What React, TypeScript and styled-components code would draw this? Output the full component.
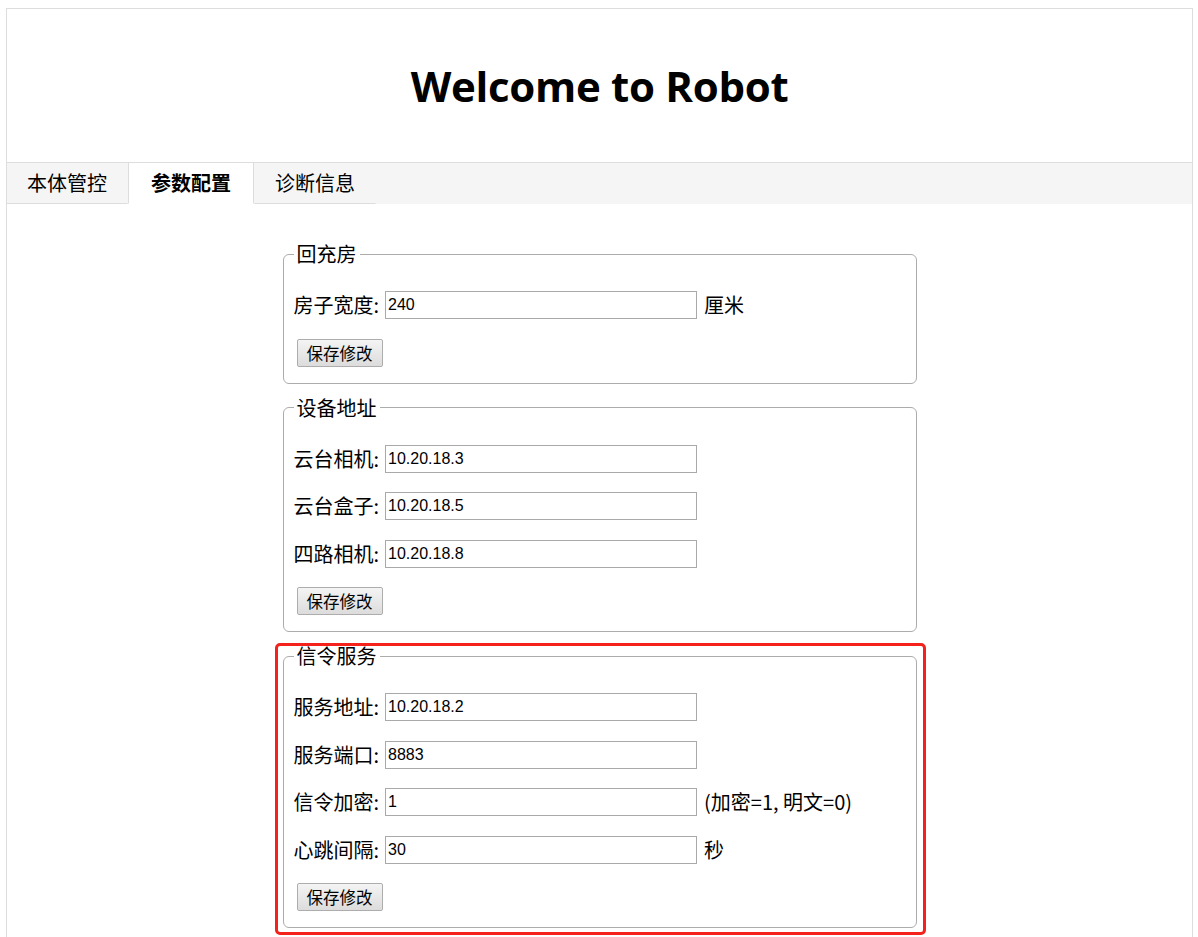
import styled, { createGlobalStyle } from "styled-components";

const GlobalStyle = createGlobalStyle`
  body {
    margin: 8px 5px 0 6px;
    background: #fff;
    color: #000;
    font-family: "Noto Sans CJK SC", "Noto Sans", sans-serif;
  }
`;

const Page = styled.div`
  border: 1px solid #ddd;
  border-bottom: none;
  min-height: 940px;
`;

const Header = styled.header`
  height: 153px;
  display: flex;
  align-items: center;
  justify-content: center;
`;

const Title = styled.h1`
  margin: 0;
  font-family: "Open Sans", "Noto Sans", sans-serif;
  font-size: 42px;
  font-weight: 700;
  letter-spacing: -0.3px;
`;

const TabBar = styled.nav`
  display: flex;
  height: 41px;
  background: #f5f5f5;
  border-top: 1px solid #ddd;
`;

const Tab = styled.div<{ $active?: boolean }>`
  display: flex;
  align-items: center;
  justify-content: center;
  padding: 0 ${({ $active }) => ($active ? "22px" : "20px")};
  font-size: 20px;
  line-height: 24px;
  font-weight: ${({ $active }) => ($active ? 700 : 400)};
  background: ${({ $active }) => ($active ? "#fff" : "transparent")};
  border-bottom: 1px solid ${({ $active }) => ($active ? "transparent" : "#ddd")};
  border-left: 1px solid ${({ $active }) => ($active ? "#ddd" : "transparent")};
  border-right: 1px solid ${({ $active }) => ($active ? "#ddd" : "transparent")};
  height: 41px;
  box-sizing: border-box;
  &:first-child {
    border-left: none;
  }
`;

const Content = styled.main`
  width: 634px;
  margin: 0 auto;
  padding-top: 38px;
  display: flex;
  flex-direction: column;
  gap: 12px;
`;

const Marked = styled.div`
  position: relative;
  &::after {
    content: "";
    position: absolute;
    inset: -1px -9px -7px -8px;
    border: 3px solid #f5221c;
    border-radius: 5px;
    pointer-events: none;
  }
`;

const Box = styled.fieldset`
  margin: 0;
  border: 1px solid #acacac;
  border-radius: 6px;
  padding: 25px 10px 16px;
  min-width: 0;
`;

const Legend = styled.legend`
  font-size: 20px;
  line-height: 24px;
  padding: 0 3px;
  margin-left: 0;
`;

const Row = styled.div`
  display: flex;
  align-items: center;
  height: 28px;
  margin-bottom: 19.5px;
  font-size: 20px;
  line-height: 28px;
`;

const Label = styled.label`
  margin-right: 6px;
  white-space: nowrap;
`;

const Input = styled.input`
  box-sizing: border-box;
  width: 312px;
  height: 28px;
  margin: 0;
  padding: 1px 2px;
  border: 1px solid #a9a9a9;
  border-radius: 0;
  font-family: "Liberation Sans", Arial, sans-serif;
  font-size: 16px;
  color: #000;
  outline: none;
`;

const Suffix = styled.span`
  margin-left: 7px;
  white-space: nowrap;
`;

const SaveButton = styled.button`
  display: block;
  box-sizing: border-box;
  height: 28px;
  margin: 1px 0 0 3px;
  padding: 0 9px;
  border: 1px solid #adadad;
  border-radius: 2px;
  background: linear-gradient(#f4f4f4, #dcdcdc);
  font-family: "Noto Sans CJK SC", sans-serif;
  font-size: 16.5px;
  line-height: 26px;
  color: #000;
`;

type Field = { label: string; value: string; suffix?: string };

const groups: { title: string; fields: Field[]; marked?: boolean }[] = [
  { title: "回充房", fields: [{ label: "房子宽度:", value: "240", suffix: "厘米" }] },
  {
    title: "设备地址",
    fields: [
      { label: "云台相机:", value: "10.20.18.3" },
      { label: "云台盒子:", value: "10.20.18.5" },
      { label: "四路相机:", value: "10.20.18.8" },
    ],
  },
  {
    title: "信令服务",
    marked: true,
    fields: [
      { label: "服务地址:", value: "10.20.18.2" },
      { label: "服务端口:", value: "8883" },
      { label: "信令加密:", value: "1", suffix: "(加密=1, 明文=0)" },
      { label: "心跳间隔:", value: "30", suffix: "秒" },
    ],
  },
];

function Group({ title, fields }: { title: string; fields: Field[] }) {
  return (
    <Box>
      <Legend>{title}</Legend>
      {fields.map((f) => (
        <Row key={f.label}>
          <Label>{f.label}</Label>
          <Input defaultValue={f.value} />
          {f.suffix && <Suffix>{f.suffix}</Suffix>}
        </Row>
      ))}
      <SaveButton>保存修改</SaveButton>
    </Box>
  );
}

export default function App() {
  return (
    <>
      <GlobalStyle />
      <Page>
        <Header>
          <Title>Welcome to Robot</Title>
        </Header>
        <TabBar>
          <Tab>本体管控</Tab>
          <Tab $active>参数配置</Tab>
          <Tab>诊断信息</Tab>
        </TabBar>
        <Content>
          {groups.map((g) =>
            g.marked ? (
              <Marked key={g.title}>
                <Group title={g.title} fields={g.fields} />
              </Marked>
            ) : (
              <Group key={g.title} title={g.title} fields={g.fields} />
            )
          )}
        </Content>
      </Page>
    </>
  );
}
